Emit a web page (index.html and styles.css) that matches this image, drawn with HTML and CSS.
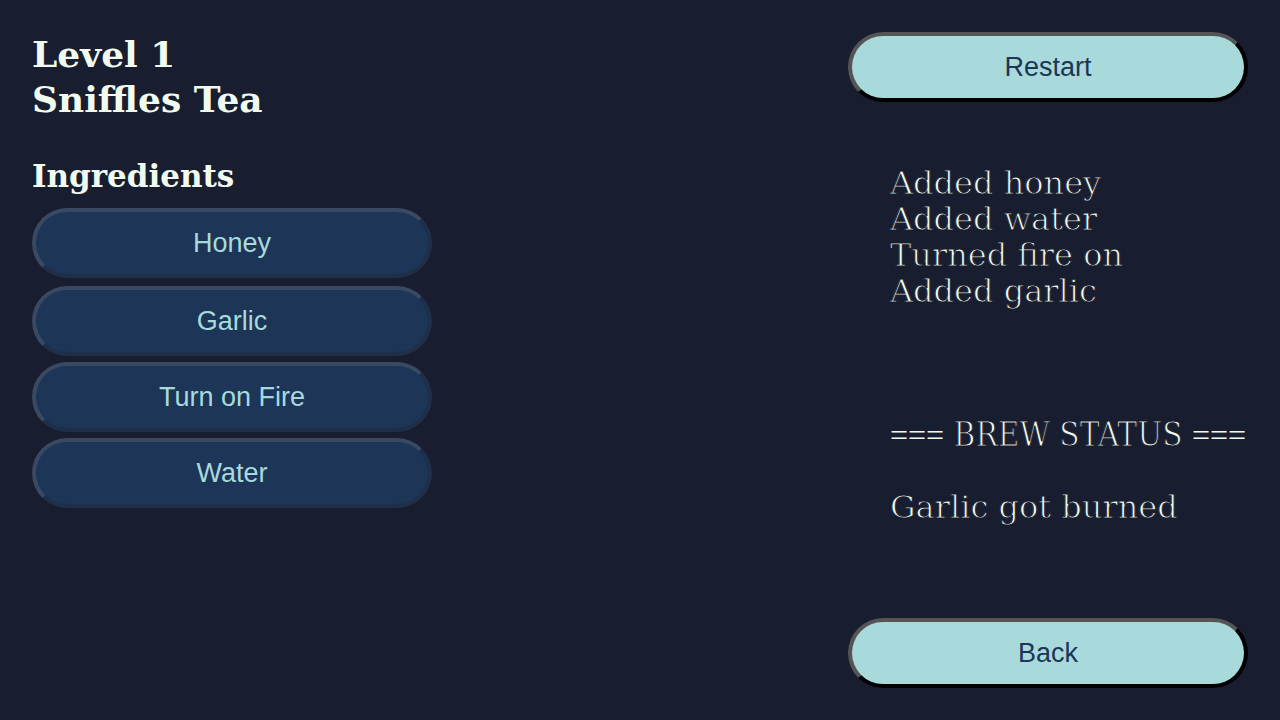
FILE: index.html
```html
<!DOCTYPE html>
<html lang="en">
<head>
<meta charset="utf-8">
<meta name="viewport" content="width=device-width, initial-scale=1">
<title>Sniffles Tea</title>
<link rel="stylesheet" href="styles.css">
</head>
<body>
<main class="game">
  <section class="recipe">
    <h1 class="title">Level 1<br>Sniffles Tea</h1>
    <h2 class="subtitle">Ingredients</h2>
    <div class="ingredients">
      <button class="button ingredient first" type="button">Honey</button>
      <button class="button ingredient" type="button">Garlic</button>
      <button class="button ingredient" type="button">Turn on Fire</button>
      <button class="button ingredient" type="button">Water</button>
    </div>
  </section>
  <section class="brew">
    <button class="button action" type="button">Restart</button>
    <div class="log">
      <p>Added honey<br>Added water<br>Turned fire on<br>Added garlic</p>
      <p class="status"><span class="rule">===</span> BREW STATUS <span class="rule">===</span></p>
      <p class="result">Garlic got burned</p>
    </div>
    <button class="button action" type="button">Back</button>
  </section>
</main>
</body>
</html>
```
FILE: styles.css
```css
* {
  box-sizing: border-box;
}

body {
  margin: 0;
  background: #191d30;
  color: #f1faee;
}

.game {
  display: flex;
  justify-content: space-between;
  gap: 32px;
  min-height: 100vh;
  padding: 32px;
}

.recipe,
.brew {
  flex: 0 1 400px;
  min-width: 0;
}

.title,
.subtitle {
  margin: 0;
  font-family: "DejaVu Serif", serif;
  font-weight: 700;
}

.title {
  font-size: 36px;
  line-height: 45px;
  white-space: nowrap;
}

.subtitle {
  margin-top: 34px;
  font-size: 31px;
  line-height: 40px;
}

.ingredients {
  display: flex;
  flex-direction: column;
  gap: 6px;
  margin-top: 12px;
}

.button {
  width: 100%;
  height: 70px;
  padding: 0 24px;
  border: 4px solid;
  border-radius: 35px;
  font: 27px/32px "Liberation Sans", Arial, sans-serif;
  cursor: pointer;
}

.ingredient {
  background: #1d3557;
  border-color: #3a4962 #202f48 #202f48 #3a4962;
  color: #a8dadc;
}

.first {
  margin-bottom: 2px;
}

.action {
  background: #a8dadc;
  border-color: #555 #000 #000 #555;
  color: #1d3557;
}

.brew {
  display: flex;
  flex-direction: column;
}

.log {
  flex: 1;
  padding: 63px 0 0 42px;
  font: 32px/36px "DejaVu Serif", serif;
  white-space: nowrap;
  -webkit-text-stroke: 1px #191d30;
}

.log p {
  margin: 0;
}

.log .status {
  margin-top: 108px;
  font-family: "DejaVu Serif Condensed", "DejaVu Serif", serif;
  font-size: 33px;
}

.rule {
  font-family: "Liberation Serif", serif;
  font-size: 32px;
  -webkit-text-stroke: 0;
}

.log .result {
  margin-top: 36px;
}
```
